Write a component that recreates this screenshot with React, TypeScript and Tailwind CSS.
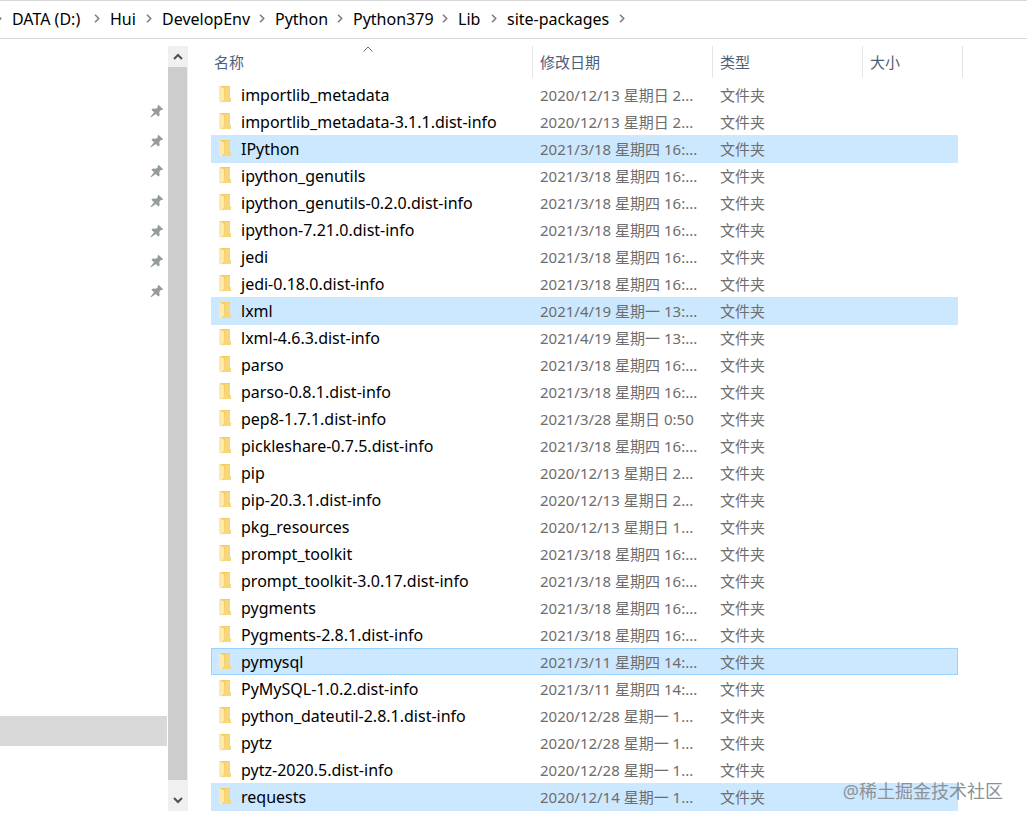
const CRUMBS = [
  { label: "DATA (D:)", width: "w-[98px]" },
  { label: "Hui", width: "w-[52px]" },
  { label: "DevelopEnv", width: "w-[113px]" },
  { label: "Python", width: "w-[78px]" },
  { label: "Python379", width: "w-[105px]" },
  { label: "Lib", width: "w-[49px]" },
  { label: "site-packages", width: "w-[128px]" }
];

const PINS = [1, 2, 3, 4, 5, 6, 7];

const FOLDERS = [
  { name: "importlib_metadata", date: "2020/12/13 星期日 2..." },
  { name: "importlib_metadata-3.1.1.dist-info", date: "2020/12/13 星期日 2..." },
  { name: "IPython", date: "2021/3/18 星期四 16:...", selected: true },
  { name: "ipython_genutils", date: "2021/3/18 星期四 16:..." },
  { name: "ipython_genutils-0.2.0.dist-info", date: "2021/3/18 星期四 16:..." },
  { name: "ipython-7.21.0.dist-info", date: "2021/3/18 星期四 16:..." },
  { name: "jedi", date: "2021/3/18 星期四 16:..." },
  { name: "jedi-0.18.0.dist-info", date: "2021/3/18 星期四 16:..." },
  { name: "lxml", date: "2021/4/19 星期一 13:...", selected: true },
  { name: "lxml-4.6.3.dist-info", date: "2021/4/19 星期一 13:..." },
  { name: "parso", date: "2021/3/18 星期四 16:..." },
  { name: "parso-0.8.1.dist-info", date: "2021/3/18 星期四 16:..." },
  { name: "pep8-1.7.1.dist-info", date: "2021/3/28 星期日 0:50" },
  { name: "pickleshare-0.7.5.dist-info", date: "2021/3/18 星期四 16:..." },
  { name: "pip", date: "2020/12/13 星期日 2..." },
  { name: "pip-20.3.1.dist-info", date: "2020/12/13 星期日 2..." },
  { name: "pkg_resources", date: "2020/12/13 星期日 1..." },
  { name: "prompt_toolkit", date: "2021/3/18 星期四 16:..." },
  { name: "prompt_toolkit-3.0.17.dist-info", date: "2021/3/18 星期四 16:..." },
  { name: "pygments", date: "2021/3/18 星期四 16:..." },
  { name: "Pygments-2.8.1.dist-info", date: "2021/3/18 星期四 16:..." },
  { name: "pymysql", date: "2021/3/11 星期四 14:...", selected: true, focused: true },
  { name: "PyMySQL-1.0.2.dist-info", date: "2021/3/11 星期四 14:..." },
  { name: "python_dateutil-2.8.1.dist-info", date: "2020/12/28 星期一 1..." },
  { name: "pytz", date: "2020/12/28 星期一 1..." },
  { name: "pytz-2020.5.dist-info", date: "2020/12/28 星期一 1..." },
  { name: "requests", date: "2020/12/14 星期一 1...", selected: true }
];

function cellClass(folder: { selected?: boolean; focused?: boolean }) {
  if (folder.focused) return "border-y border-[#99d1ff] bg-[#cce8ff] p-0";
  if (folder.selected) return "border-y border-transparent bg-[#cce8ff] p-0 shadow-[0_1px_0_#cce8ff]";
  return "border-y border-transparent p-0";
}

function FolderIcon() {
  return (
    <svg className="block h-[18px] w-[14px] shrink-0" viewBox="0 0 14 18" aria-hidden="true">
      <path d="M2 0h10v12l1 1v3H2z" fill="#f3cc66" />
      <path d="M7 1h5v11l1 1v3H6z" fill="#f8d67a" />
      <path d="M1 0l5 2.500v11L3.500 17 1 15.500z" fill="#fde9a9" />
    </svg>
  );
}

function PinIcon() {
  return (
    <svg className="block size-[14px]" viewBox="0 0 14 14" aria-hidden="true">
      <path
        d="M8.500.8 13.200 5.200l-1.300.9-1-.1-1.700 2 .5 3.200-1.300 1.300-2.600-2.400L1.200 13.300l-.7-.5 3.600-4.500L1.400 5.800l1.400-1.300 3.200.3 1.900-1.800-.3-1.100z"
        fill="#959b9f"
      />
    </svg>
  );
}

function Chevron() {
  return (
    <svg className="h-[9px] w-[6px] shrink-0" viewBox="0 0 6 9" fill="none" aria-hidden="true">
      <path d="M1 .8 4.700 4.500 1 8.200" stroke="#808080" strokeWidth="1.600" />
    </svg>
  );
}

export default function App() {
  return (
    <div className="relative min-h-screen overflow-hidden bg-white font-['Noto_Sans','Noto_Sans_CJK_SC',sans-serif] text-[15px] leading-5 text-black">
      <nav
        aria-label="Path"
        className="flex h-[39px] items-center border-y border-[#d9d9d9] pb-0.5 text-base leading-5 whitespace-nowrap"
      >
        <ol className="flex items-center">
          <li className="w-3 overflow-hidden">
            <div className="-ml-1">
              <Chevron />
            </div>
          </li>
          {CRUMBS.map((crumb) => (
            <li key={crumb.label} className={`flex items-center justify-between pr-2.5 ${crumb.width}`}>
              <a href="#">{crumb.label}</a>
              <Chevron />
            </li>
          ))}
        </ol>
      </nav>

      <div className="flex pt-[7px]">
        <aside className="flex w-[168px] shrink-0 flex-col justify-between pr-px pb-[65px]">
          <ul className="flex flex-col items-end gap-4 pt-[58px] pr-[3px]">
            {PINS.map((pin) => (
              <li key={pin}>
                <PinIcon />
              </li>
            ))}
          </ul>
          <div className="h-[30px] bg-[#d9d9d9]" />
        </aside>

        <div className="flex w-5 shrink-0 flex-col bg-[#f0f0f0]">
          <button type="button" aria-label="Scroll up" className="flex h-[21px] items-center justify-center">
            <svg className="h-[7px] w-[10px]" viewBox="0 0 10 7" fill="none">
              <path d="M1 6l4-4 4 4" stroke="#505050" strokeWidth="2" />
            </svg>
          </button>
          <div className="mr-px flex-1 bg-[#cdcdcd]" />
          <button
            type="button"
            aria-label="Scroll down"
            className="flex h-[31px] items-center justify-center pt-2.5"
          >
            <svg className="h-[7px] w-[10px]" viewBox="0 0 10 7" fill="none">
              <path d="M1 1l4 4 4-4" stroke="#505050" strokeWidth="2" />
            </svg>
          </button>
        </div>

        <main className="min-w-0 flex-1 pr-16 pb-px pl-[23px]">
          <table className="w-full table-fixed border-separate border-spacing-0 whitespace-nowrap">
            <colgroup>
              <col />
              <col className="w-[180px]" />
              <col className="w-[150px]" />
              <col className="w-[95px]" />
              <col className="w-[5px]" />
            </colgroup>
            <thead>
              <tr className="h-8 text-left text-[#4c607a]">
                <th className="relative border-r border-[#e5e5e5] p-0 pl-[3px] font-normal">
                  名称
                  <svg
                    className="absolute top-0 left-1/2 -ml-2 h-[6px] w-[10px]"
                    viewBox="0 0 10 6"
                    fill="none"
                    aria-hidden="true"
                  >
                    <path d="M.5 5.500 5 1l4.500 4.500" stroke="#6d6d6d" />
                  </svg>
                </th>
                <th className="border-r border-[#e5e5e5] p-0 pl-[7px] font-normal">修改日期</th>
                <th className="border-r border-[#e5e5e5] p-0 pl-[7px] font-normal">类型</th>
                <th colSpan={2} className="border-r border-[#e5e5e5] p-0 pl-[7px] font-normal">
                  大小
                </th>
              </tr>
            </thead>
            <tbody>
              <tr aria-hidden="true" className="h-[3px]">
                <td className="p-0" colSpan={5} />
              </tr>
              {FOLDERS.map((folder) => (
                <tr key={folder.name} className="h-[27px] text-[#6d6d6d]">
                  <td className={`border-l ${cellClass(folder)}`}>
                    <div className="flex items-center gap-[9px] pl-1.5 text-base leading-5 text-black">
                      <FolderIcon />
                      {folder.name}
                    </div>
                  </td>
                  <td className={cellClass(folder)}>
                    <div className="pl-[7px]">{folder.date}</div>
                  </td>
                  <td className={cellClass(folder)}>
                    <div className="pl-[7px]">文件夹</div>
                  </td>
                  <td className={`border-r ${cellClass(folder)}`} />
                </tr>
              ))}
            </tbody>
          </table>
        </main>
      </div>

      <p className="absolute right-6 bottom-6 text-lg leading-5 text-[#8b9197]">@稀土掘金技术社区</p>
    </div>
  );
}
